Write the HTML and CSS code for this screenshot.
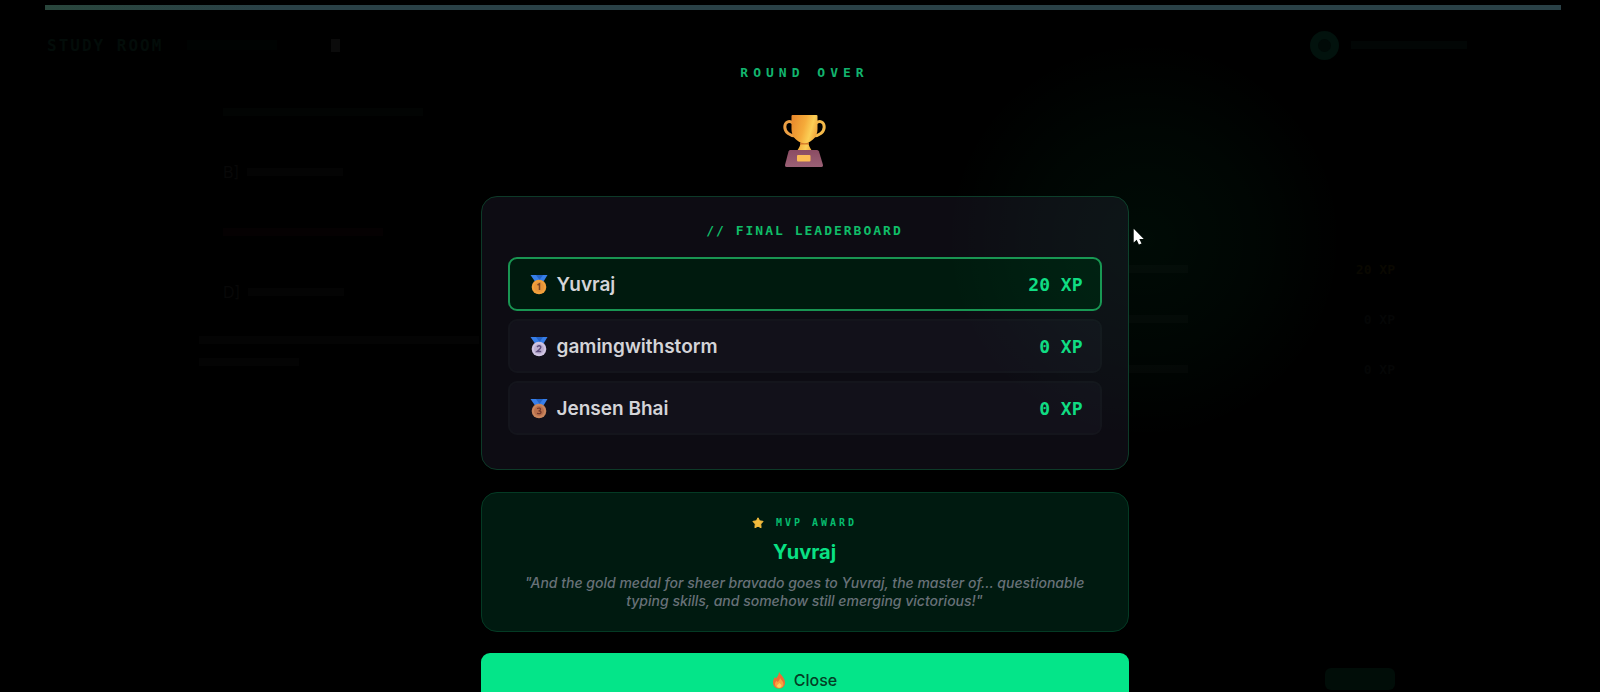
FILE: index.html
```html
<!DOCTYPE html>
<html lang="en">
<head>
	<meta charset="UTF-8">
	<meta name="viewport" content="width=device-width, initial-scale=1.0">
	<title>Study Room - Round Over</title>
	<link rel="stylesheet" href="styles.css">
</head>
<body>
	<!-- dimmed room behind the overlay -->
	<div class="room" aria-hidden="true">
		<div class="progress"></div>
		<div class="topbar">
			<span class="brand">STUDY ROOM</span>
			<span class="code"></span>
			<span class="chip"></span>
			<span class="user"><i class="avatar"></i><i class="username"></i></span>
		</div>
		<div class="board">
			<div class="quiz">
				<div class="question"></div>
				<div class="option">B]<i class="line"></i></div>
				<div class="option wrong"><i class="line"></i></div>
				<div class="option">D]<i class="line"></i></div>
				<div class="result"></div>
				<div class="result short"></div>
			</div>
			<div class="side">
				<div class="score lead"><i class="line"></i>20 XP</div>
				<div class="score"><i class="line"></i>0 XP</div>
				<div class="score"><i class="line"></i>0 XP</div>
				<div class="send"></div>
			</div>
		</div>
	</div>

	<div class="overlay" role="dialog" aria-modal="true" aria-labelledby="round-title">
		<h1 class="round-title" id="round-title">ROUND OVER</h1>
		<svg class="trophy" viewBox="0 0 44 52" role="img" aria-label="Trophy">
			<defs>
				<linearGradient id="cup" x1="0" y1="0.2" x2="1" y2="0.6">
					<stop offset="0" stop-color="#e98a2c"/>
					<stop offset="0.45" stop-color="#f5ab3a"/>
					<stop offset="0.72" stop-color="#fbcf56"/>
					<stop offset="1" stop-color="#ef9c36"/>
				</linearGradient>
				<linearGradient id="base" x1="0" y1="0" x2="0" y2="1">
					<stop offset="0" stop-color="#8b4c63"/>
					<stop offset="1" stop-color="#9a6075"/>
				</linearGradient>
			</defs>
			<path d="M10 8C6 5 1.800 7 1.800 12s5 9 11 9" fill="none" stroke="#eda044" stroke-width="3"/>
			<path d="M33 8c4-3 8.200-1 8.200 4s-5 9-11 9" fill="none" stroke="#f5ba4a" stroke-width="3"/>
			<path d="M8.500 1Q8.500 0 9.500 0h24q1 0 1 1v13c0 7-4 11-9 13.500 0 3.500 1.500 5 3.500 8.500H14c2-3.500 3.500-5 3.500-8.500-5-2.500-9-6.500-9-13.500z" fill="url(#cup)"/>
			<path d="M17.500 27.500q4 1.500 8 0l.3 2h-8.600z" fill="#d77a2b"/>
			<path d="M7 35h27q1.500 0 2 1.500L40 50q.3 2-1.500 2h-35Q1.700 52 2 50l3.500-13.500Q6 35 7 35z" fill="url(#base)"/>
			<rect x="14" y="40" width="13.500" height="6.500" rx="1" fill="#fcbc55"/>
		</svg>

		<section class="card leaderboard">
			<h2 class="card-title">// FINAL LEADERBOARD</h2>
			<ol class="ranks">
				<li class="rank first">
					<svg class="medal" viewBox="0 0 24 24" role="img" aria-label="1st">
						<path d="M3.500 3h7l2 3 2-3h6l-4 6.500H8z" fill="#367ee8"/>
						<path d="M9 3h7l-3.500 5z" fill="#2463c7"/>
						<circle cx="12" cy="15" r="7.300" fill="#f2a03c"/>
						<circle cx="12" cy="15" r="5" fill="#e8953a"/>
						<path d="M10.500 13l2-1.200V18" fill="none" stroke="#7a4524" stroke-width="1.500"/>
					</svg>
					<span class="name">Yuvraj</span>
					<span class="xp">20 XP</span>
				</li>
				<li class="rank">
					<svg class="medal" viewBox="0 0 24 24" role="img" aria-label="2nd">
						<path d="M3.500 3h7l2 3 2-3h6l-4 6.500H8z" fill="#367ee8"/>
						<path d="M9 3h7l-3.500 5z" fill="#2463c7"/>
						<circle cx="12" cy="15" r="7.300" fill="#cfc4e2"/>
						<circle cx="12" cy="15" r="5" fill="#bbaed0"/>
						<path d="M10 13q2-2.300 3.700-.5.800 1.500-3.700 5h4.200" fill="none" stroke="#5c4c7c" stroke-width="1.400"/>
					</svg>
					<span class="name">gamingwithstorm</span>
					<span class="xp">0 XP</span>
				</li>
				<li class="rank">
					<svg class="medal" viewBox="0 0 24 24" role="img" aria-label="3rd">
						<path d="M3.500 3h7l2 3 2-3h6l-4 6.500H8z" fill="#367ee8"/>
						<path d="M9 3h7l-3.500 5z" fill="#2463c7"/>
						<circle cx="12" cy="15" r="7.300" fill="#c9855c"/>
						<circle cx="12" cy="15" r="5" fill="#b9704c"/>
						<path d="M10 12.500q3.500-1 3.500.8 0 1.500-2 1.500 2.500 0 2.500 1.500 0 2-4 1" fill="none" stroke="#74392c" stroke-width="1.300"/>
					</svg>
					<span class="name">Jensen Bhai</span>
					<span class="xp">0 XP</span>
				</li>
			</ol>
		</section>

		<section class="card mvp">
			<h2 class="mvp-label">
				<svg class="star" viewBox="0 0 12 12" aria-hidden="true">
					<path d="M6 .8l1.600 3 3.500.6-2.400 2.600.4 3.700L6 9.200l-3.100 1.500.4-3.700L.9 4.400l3.500-.6z" fill="#f3bb3d" stroke="#f3bb3d" stroke-width="1" stroke-linejoin="round"/>
				</svg>
				MVP AWARD
			</h2>
			<p class="mvp-name">Yuvraj</p>
			<p class="quote">"And the gold medal for sheer bravado goes to Yuvraj, the master of... questionable typing skills, and somehow still emerging victorious!"</p>
		</section>

		<button class="close" type="button">
			<svg class="flame" viewBox="0 0 14 18" aria-hidden="true">
				<path d="M7 .5c.5 3 6 5.500 6 11 0 4-3 6-6 6s-6-2-6-6c0-2.500 1-4 1.800-5.500l1.300 1.500C5.500 5.500 7 3.500 7 .5z" fill="#ee6c35"/>
				<path d="M8 6.500c.5 2.500 3.500 3.500 3.500 6.500 0 2.500-2 4-4.300 4-2.500 0-4.200-1.500-4.200-4 0-1.500.8-2.500 1.500-3.300l1 1.300C7 10 8 8.500 8 6.500z" fill="#f9a03f"/>
				<path d="M7.500 12c1 1 2 1.500 2 2.800 0 1.200-1 2-2.200 2S5 16 5 14.800c0-1.300 1.500-1.500 2.500-2.800z" fill="#fdd05a"/>
			</svg>
			<span>Close</span>
		</button>
	</div>

	<div class="glow"></div>
	<svg class="cursor" viewBox="0 0 11 17" aria-hidden="true">
		<path d="M.7.700v13.800l3-2.700 2.200 4.700 2.600-1-2.200-4.600h4.400z" fill="#fff"/>
	</svg>
</body>
</html>
```
FILE: styles.css
```css
*{
	margin: 0;
	padding: 0;
	box-sizing: border-box;
}
body{
	height: 100vh;
	overflow: hidden;
	background: #000;
	color: #d4d4d8;
	font-family: Inter, "Liberation Sans", sans-serif;
}

/* room behind */
.room{
	position: absolute;
	inset: 0;
	padding: 5px 39px 0 45px;
}
.progress{
	height: 5px;
	background: linear-gradient(90deg, #29463c, #2a4147 15%);
}
.topbar{
	display: flex;
	align-items: center;
	gap: 24px;
	height: 70px;
	padding: 0 94px 0 2px;
}
.brand{
	font: bold 16px "DejaVu Sans Mono", monospace;
	letter-spacing: 2px;
	color: #030c09;
}
.code{
	width: 90px;
	height: 10px;
	background: #000302;
}
.chip{
	width: 9px;
	height: 13px;
	margin-left: 30px;
	background: #0b0b0b;
}
.user{
	display: flex;
	align-items: center;
	gap: 12px;
	margin-left: auto;
}
.avatar{
	width: 29px;
	height: 29px;
	border: 8px solid #02120d;
	border-radius: 50%;
	background: #010a07;
}
.username{
	width: 116px;
	height: 8px;
	background: #020605;
}
.board{
	display: grid;
	grid-template-columns: 5fr 2fr;
	padding: 0 130px;
}
.quiz{
	padding: 28px 24px;
	font-size: 16px;
	color: #080808;
}
.question{
	width: 200px;
	height: 8px;
	margin: 0 0 26px 24px;
	background: #020403;
}
.option{
	display: flex;
	align-items: center;
	gap: 8px;
	height: 60px;
	padding-left: 24px;
}
.line{
	width: 96px;
	height: 8px;
	background: #040404;
}
.wrong .line{
	width: 160px;
	background: #050102;
}
.result{
	width: 280px;
	height: 8px;
	margin: 14px 0;
	background: #040404;
}
.short{
	width: 100px;
}
.side{
	display: flex;
	flex-direction: column;
	height: 610px;
	padding-top: 164px;
}
.score{
	display: flex;
	align-items: center;
	justify-content: space-between;
	height: 50px;
	padding: 0 36px 0 20px;
	font: bold 13px "DejaVu Sans Mono", monospace;
	color: #050606;
}
.lead{
	color: #0a0801;
}
.send{
	width: 70px;
	height: 22px;
	margin: auto 36px 0 auto;
	border-radius: 6px;
	background: #010d08;
}

/* round over overlay */
.overlay{
	position: absolute;
	inset: 0;
	display: flex;
	flex-direction: column;
	align-items: center;
	padding: 64px 0 0 9px;
	overflow: hidden;
}
.overlay>*{
	flex-shrink: 0;
}
.round-title{
	font: bold 13px/18px "DejaVu Sans Mono", monospace;
	letter-spacing: 5px;
	color: #12b46e;
}
.trophy{
	width: 44px;
	height: 52px;
	margin: 33px 0 29px;
}
.card{
	width: 100%;
	max-width: 648px;
	border: 1px solid #0d3a28;
	border-radius: 16px;
}
.leaderboard{
	padding: 26px;
	background: #0d0c13;
}
.card-title{
	margin-bottom: 18px;
	font: bold 13px/16px "DejaVu Sans Mono", monospace;
	letter-spacing: 2px;
	text-align: center;
	color: #10bd68;
}
.ranks{
	list-style: none;
}
.rank{
	display: flex;
	align-items: center;
	height: 54px;
	margin-bottom: 8px;
	padding: 0 17px;
	border: 2px solid #14151c;
	border-radius: 9px;
	background: #12111a;
}
.first{
	border-color: #199552;
	background: #001a0e;
}
.medal{
	width: 24px;
	height: 24px;
}
.name{
	margin-left: 6px;
	font-size: 19px;
	font-weight: 600;
}
.xp{
	margin-left: auto;
	font: bold 18px "DejaVu Sans Mono", monospace;
	color: #10dc83;
}
.mvp{
	height: 140px;
	margin-top: 22px;
	padding: 21px 36px;
	border-color: #043a24;
	background: #001a10;
	text-align: center;
}
.mvp-label{
	display: flex;
	align-items: center;
	justify-content: center;
	gap: 12px;
	font: bold 10px/18px "DejaVu Sans Mono", monospace;
	letter-spacing: 3px;
	color: #06bd6f;
}
.star{
	width: 12px;
	height: 12px;
}
.mvp-name{
	margin: 6px 0 8px;
	font-size: 20px;
	font-weight: 700;
	line-height: 28px;
	color: #09e184;
}
.quote{
	font-size: 14px;
	font-style: italic;
	font-weight: 500;
	line-height: 18px;
	color: #687178;
}
.close{
	display: flex;
	align-items: center;
	justify-content: center;
	gap: 8px;
	width: 100%;
	max-width: 648px;
	height: 54px;
	margin-top: 21px;
	border: 0;
	border-radius: 9px;
	background: #04e589;
	color: #043d25;
	font: 500 16px Inter, "Liberation Sans", sans-serif;
}
.flame{
	width: 14px;
	height: 18px;
}

/* soft light on the right side */
.glow{
	position: absolute;
	top: 40px;
	left: 59%;
	width: 400px;
	height: 400px;
	background: radial-gradient(closest-side, rgba(0, 255, 130, 0.045), rgba(0, 255, 130, 0.025) 55%, transparent);
	pointer-events: none;
}
.cursor{
	position: absolute;
	top: 228px;
	left: 1133px;
	width: 11px;
	height: 17px;
}
```
